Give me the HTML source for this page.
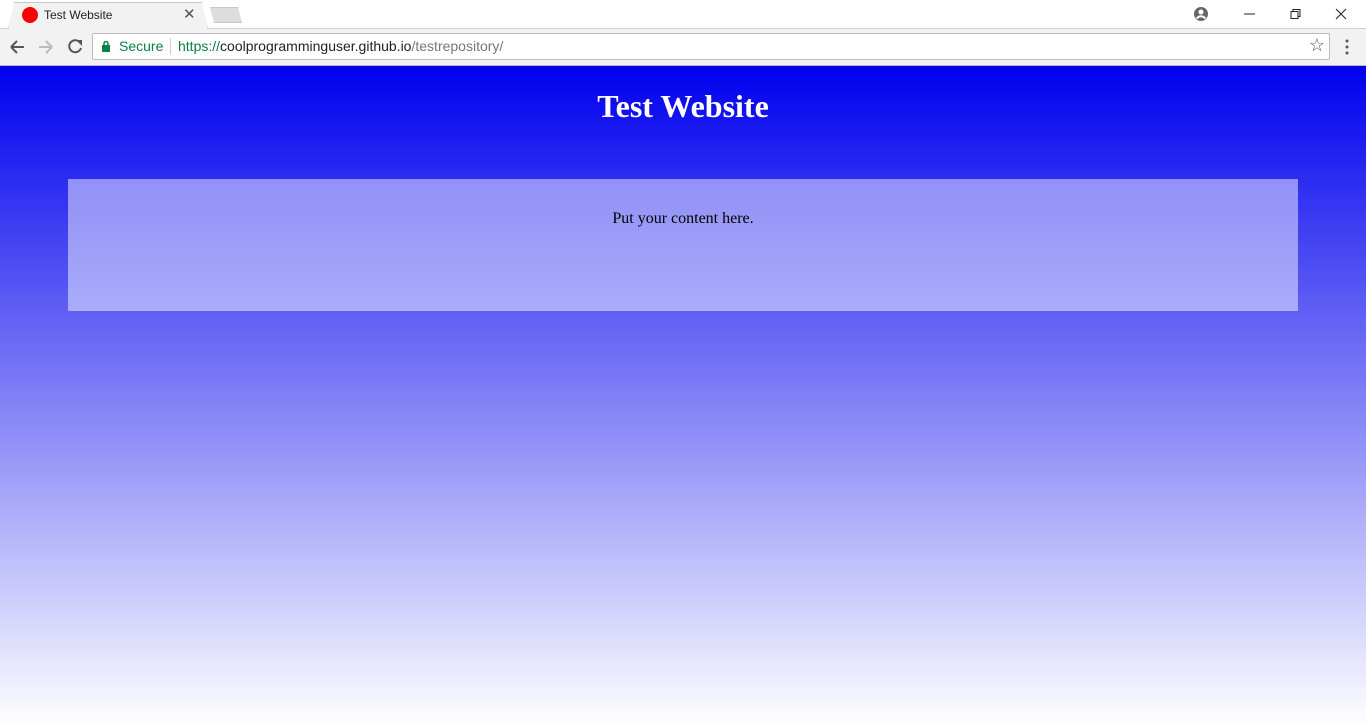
<!DOCTYPE html>
<html><head><style>
*{margin:0;padding:0;box-sizing:border-box}
body{width:1366px;height:727px;overflow:hidden;font-family:"Liberation Sans",sans-serif;background:#fff}
.tabs{height:29px;background:#fff;position:relative;border-bottom:1px solid #d0d0d0}
.tab{position:absolute;left:8px;top:2px;width:200px;height:27px;background:#f2f2f2;border:1px solid #c8c8c8;border-bottom:none;clip-path:polygon(0 100%,6px 0,194px 0,200px 100%)}
.tabin{position:absolute;left:9px;top:3px;width:198px;height:27px;background:#f2f2f2;clip-path:polygon(0 100%,6px 0,192px 0,198px 100%)}
.fav{position:absolute;left:22px;top:7px;width:16px;height:16px;border-radius:50%;background:#f00}
.tt{position:absolute;left:44px;top:8px;font-size:12px;color:#222}
.tx{position:absolute;left:183px;top:5px;font-size:15px;color:#555}
.nt{position:absolute;left:210px;top:7px;width:32px;height:16px;background:#ddd;border:1px solid #c8c8c8;clip-path:polygon(4px 100%,0 0,28px 0,32px 100%)}
.bar{height:37px;background:#f2f2f2;position:relative;border-bottom:1px solid #b8b8b8}
.omni{position:absolute;left:92px;top:4px;width:1238px;height:27px;background:#fff;border:1px solid #bcbcbc;border-radius:2px;font-size:14px}
.page{position:absolute;top:66px;left:0;width:1366px;height:661px;background:linear-gradient(#0000ee,#fff)}
h1{font-family:"Liberation Serif",serif;color:#fff;font-size:32px;text-align:center;position:absolute;top:22px;width:100%}
.box{position:absolute;left:68px;top:113px;width:1230px;height:132px;background:rgba(255,255,255,.48);font-family:"Liberation Serif",serif;font-size:16px;text-align:center;padding-top:31px}
</style></head><body>
<div class="tabs">
<div class="tab"></div><div class="tabin"></div>
<div class="fav"></div><div class="tt">Test Website</div><div class="tx">✕</div>
<div class="nt"></div>
<svg style="position:absolute;left:1193px;top:6px" width="16" height="16"><circle cx="8" cy="8" r="7" fill="#666"/><circle cx="8" cy="6" r="2.5" fill="#fff"/><path d="M3.5 12.5 Q8 8 12.5 12.5" stroke="#fff" stroke-width="2" fill="none"/></svg>
<svg style="position:absolute;left:1240px;top:6px" width="120" height="16"><path d="M4 8H15" stroke="#222"/><path d="M51 5.5h7v7h-7zM53 5.5V3.5h7v7h-2" stroke="#222" fill="none"/><path d="M96 3l10 10M106 3L96 13" stroke="#222"/></svg>
</div>
<div class="bar">
<svg style="position:absolute;left:8px;top:9px" width="80" height="18"><path d="M3 9h13M3 9l6-6M3 9l6 6" stroke="#555" stroke-width="2" fill="none"/><path d="M31 9h13M44 9l-6-6M44 9l-6 6" stroke="#bbb" stroke-width="2" fill="none"/><path d="M72 4.5A6 6 0 1 0 73 10" stroke="#555" stroke-width="2" fill="none"/><path d="M68 2h6v6z" fill="#555"/></svg>
<div class="omni">
<svg style="position:absolute;left:8px;top:6px" width="10" height="13"><rect x="1" y="5" width="8" height="7" fill="#0b8043"/><path d="M3 5V3.5a2 2 0 0 1 4 0V5" stroke="#0b8043" stroke-width="1.5" fill="none"/></svg>
<span style="position:absolute;left:26px;top:4px;color:#0b8043">Secure</span>
<span style="position:absolute;left:77px;top:4px;width:1px;height:17px;background:#ccc"></span>
<span style="position:absolute;left:85px;top:4px;color:#0b8043">https://<span style="color:#222">coolprogramminguser.github.io</span><span style="color:#777">/testrepository/</span></span>
<span style="position:absolute;right:4px;top:1px;font-size:18px;color:#555">☆</span>
</div>
<svg style="position:absolute;left:1344px;top:10px" width="6" height="16"><circle cx="3" cy="2" r="1.5" fill="#555"/><circle cx="3" cy="8" r="1.5" fill="#555"/><circle cx="3" cy="14" r="1.5" fill="#555"/></svg>
</div>
<div class="page">
<h1>Test Website</h1>
<div class="box">Put your content here.</div>
</div>
</body></html>
